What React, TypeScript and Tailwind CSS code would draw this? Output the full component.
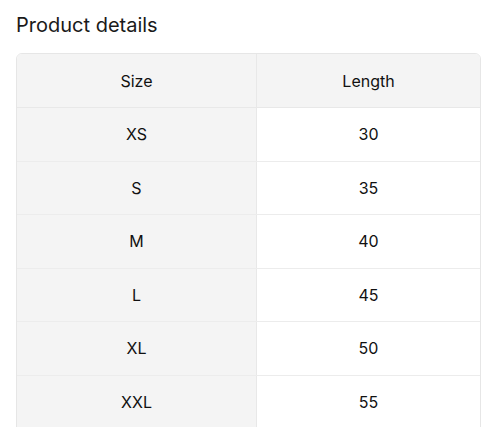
import React from "react";

const rows: [string, string][] = [
  ["XS", "30"],
  ["S", "35"],
  ["M", "40"],
  ["L", "45"],
  ["XL", "50"],
  ["XXL", "55"],
];

export default function App() {
  return (
    <div
      className="w-[500px] h-[427px] overflow-hidden bg-white text-[#111]"
      style={{ fontFamily: "Inter, 'Noto Sans', sans-serif" }}
    >
      <div className="pl-4 pt-[11px] text-[20px] leading-[28px] text-[#1a1a1a]">
        Product details
      </div>
      <div className="mt-[14px] ml-4 w-[465px] rounded-t-[6px] border border-[#e6e6e6] overflow-hidden">
        <div className="grid grid-cols-[240px_1fr] h-[54px] bg-[#f4f4f4] border-b border-[#e8e8e8] text-[16px]">
          <div className="flex items-center justify-center border-r border-[#e8e8e8]">Size</div>
          <div className="flex items-center justify-center">Length</div>
        </div>
        {rows.map(([s, l]) => (
          <div
            key={s}
            className="grid grid-cols-[240px_1fr] h-[53.5px] border-b border-[#ececec] text-[16px]"
          >
            <div className="flex items-center justify-center bg-[#f4f4f4] border-r border-[#e8e8e8]">{s}</div>
            <div className="flex items-center justify-center bg-white">{l}</div>
          </div>
        ))}
      </div>
    </div>
  );
}
